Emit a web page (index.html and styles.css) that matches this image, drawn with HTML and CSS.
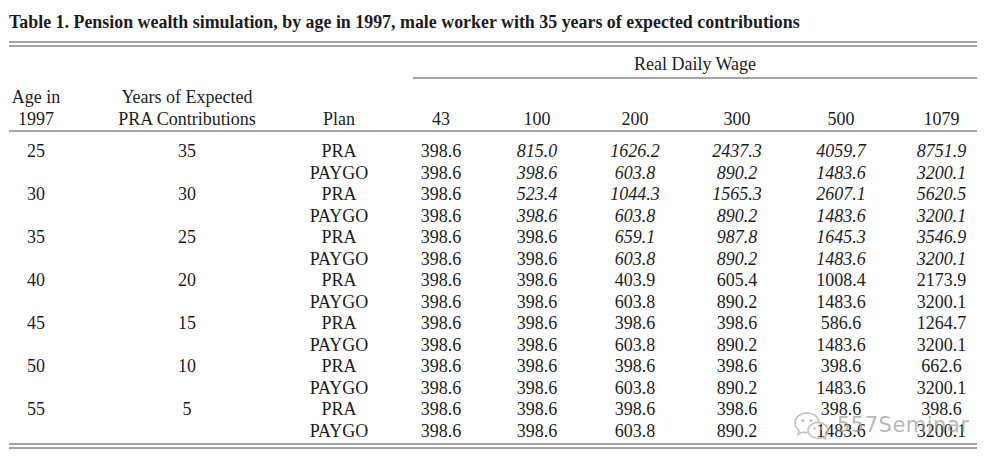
FILE: index.html
```html
<!DOCTYPE html>
<html lang="en">
<head>
<meta charset="utf-8">
<title>Table 1. Pension wealth simulation</title>
<link rel="stylesheet" href="styles.css">
</head>
<body>
<div class="page">
  <h1 class="title">Table 1. Pension wealth simulation, by age in 1997, male worker with 35 years of expected contributions</h1>
  <div class="rule-double"></div>

  <div class="wage-head">Real Daily Wage</div>

  <div class="row head">
    <div>Age in<br>1997</div>
    <div>Years of Expected<br>PRA Contributions</div>
    <div>Plan</div>
    <div>43</div>
    <div>100</div>
    <div>200</div>
    <div>300</div>
    <div>500</div>
    <div>1079</div>
  </div>

  <div class="body">
    <div class="row"><div>25</div><div>35</div><div>PRA</div><div>398.6</div><div class="i">815.0</div><div class="i">1626.2</div><div class="i">2437.3</div><div class="i">4059.7</div><div class="i">8751.9</div></div>
    <div class="row"><div></div><div></div><div>PAYGO</div><div>398.6</div><div class="i">398.6</div><div class="i">603.8</div><div class="i">890.2</div><div class="i">1483.6</div><div class="i">3200.1</div></div>
    <div class="row"><div>30</div><div>30</div><div>PRA</div><div>398.6</div><div class="i">523.4</div><div class="i">1044.3</div><div class="i">1565.3</div><div class="i">2607.1</div><div class="i">5620.5</div></div>
    <div class="row"><div></div><div></div><div>PAYGO</div><div>398.6</div><div class="i">398.6</div><div class="i">603.8</div><div class="i">890.2</div><div class="i">1483.6</div><div class="i">3200.1</div></div>
    <div class="row"><div>35</div><div>25</div><div>PRA</div><div>398.6</div><div>398.6</div><div class="i">659.1</div><div class="i">987.8</div><div class="i">1645.3</div><div class="i">3546.9</div></div>
    <div class="row"><div></div><div></div><div>PAYGO</div><div>398.6</div><div>398.6</div><div class="i">603.8</div><div class="i">890.2</div><div class="i">1483.6</div><div class="i">3200.1</div></div>
    <div class="row"><div>40</div><div>20</div><div>PRA</div><div>398.6</div><div>398.6</div><div>403.9</div><div>605.4</div><div>1008.4</div><div>2173.9</div></div>
    <div class="row"><div></div><div></div><div>PAYGO</div><div>398.6</div><div>398.6</div><div>603.8</div><div>890.2</div><div>1483.6</div><div>3200.1</div></div>
    <div class="row"><div>45</div><div>15</div><div>PRA</div><div>398.6</div><div>398.6</div><div>398.6</div><div>398.6</div><div>586.6</div><div>1264.7</div></div>
    <div class="row"><div></div><div></div><div>PAYGO</div><div>398.6</div><div>398.6</div><div>603.8</div><div>890.2</div><div>1483.6</div><div>3200.1</div></div>
    <div class="row"><div>50</div><div>10</div><div>PRA</div><div>398.6</div><div>398.6</div><div>398.6</div><div>398.6</div><div>398.6</div><div>662.6</div></div>
    <div class="row"><div></div><div></div><div>PAYGO</div><div>398.6</div><div>398.6</div><div>603.8</div><div>890.2</div><div>1483.6</div><div>3200.1</div></div>
    <div class="row"><div>55</div><div>5</div><div>PRA</div><div>398.6</div><div>398.6</div><div>398.6</div><div>398.6</div><div>398.6</div><div>398.6</div></div>
    <div class="row"><div></div><div></div><div>PAYGO</div><div>398.6</div><div>398.6</div><div>603.8</div><div>890.2</div><div>1483.6</div><div>3200.1</div></div>
  </div>

  <div class="rule-double bottom"></div>

  <div class="watermark">
    <svg class="wm-icon" width="38" height="30" viewBox="0 0 38 30" aria-hidden="true">
      <path d="M14 3 C7 3 2 7.5 2 13 C2 16 3.6 18.6 6 20.4 L5 24.5 L9.6 22 C11 22.5 12.5 22.8 14 22.8" fill="none" stroke="#b8b8b8" stroke-width="1.6" stroke-linecap="round"/>
      <path d="M14 3 C20.5 3 25.5 7 26 12" fill="none" stroke="#b8b8b8" stroke-width="1.6" stroke-linecap="round"/>
      <circle cx="10" cy="10.5" r="1.5" fill="#b8b8b8"/>
      <circle cx="18" cy="10.5" r="1.5" fill="#b8b8b8"/>
      <path d="M25 12.5 C30.5 12.5 35 16 35 20.5 C35 22.8 33.8 24.8 32 26.2 L32.8 29 L29.3 27.4 C28 27.9 26.6 28.2 25 28.2 C19.5 28.2 15 24.7 15 20.4 C15 16 19.5 12.5 25 12.5 Z" fill="none" stroke="#b8b8b8" stroke-width="1.6" stroke-linejoin="round"/>
      <circle cx="21.5" cy="18.5" r="1.2" fill="#b8b8b8"/>
      <circle cx="28.5" cy="18.5" r="1.2" fill="#b8b8b8"/>
    </svg>
    <span class="wm-text">557Seminar</span>
  </div>
</div>
</body>
</html>
```

FILE: styles.css
```css
* {
  box-sizing: border-box;
}

html, body {
  margin: 0;
  padding: 0;
  background: #ffffff;
}

body {
  font-family: "Liberation Serif", "Times New Roman", serif;
  color: #1c1c1c;
}

.page {
  position: relative;
  width: 968px;
  margin-left: 9px;
}

.title {
  margin: 0;
  padding-top: 12px;
  font-size: 17.9px;
  line-height: 20px;
  font-weight: bold;
  white-space: nowrap;
}

.rule-double {
  margin-top: 9px;
  height: 6px;
  border-top: 2px solid #a4a4a4;
  border-bottom: 2px solid #a4a4a4;
}

.rule-double.bottom {
  margin-top: 1px;
}

.wage-head {
  margin-top: 7px;
  margin-left: 404px;
  padding-bottom: 1.5px;
  border-bottom: 2px solid #a4a4a4;
  text-align: center;
  font-size: 18px;
  line-height: 21.5px;
}

.row {
  display: grid;
  grid-template-columns:
    [age] 54px 49px
    [yrs] 150px 42px
    [plan] 70px 32px
    [w1] 70px 26px
    [w2] 70px 28px
    [w3] 70px 32px
    [w4] 70px 34px
    [w5] 70px 30px
    [w6] 71px;
  font-size: 18px;
  line-height: 21.5px;
  text-align: center;
  white-space: nowrap;
}

.row > :nth-child(1) { grid-column: age; }
.row > :nth-child(2) { grid-column: yrs; }
.row > :nth-child(3) { grid-column: plan; }
.row > :nth-child(4) { grid-column: w1; }
.row > :nth-child(5) { grid-column: w2; }
.row > :nth-child(6) { grid-column: w3; }
.row > :nth-child(7) { grid-column: w4; }
.row > :nth-child(8) { grid-column: w5; }
.row > :nth-child(9) { grid-column: w6; }

.row > div {
  justify-self: center;
}

.head {
  margin-top: 8px;
  border-bottom: 2px solid #a4a4a4;
}

.head > div {
  align-self: end;
}

.body {
  padding-top: 9px;
}

.i {
  font-style: italic;
}

.watermark {
  position: absolute;
  left: 784px;
  top: 410px;
  display: flex;
  align-items: center;
  gap: 6px;
  opacity: 0.85;
}

.wm-icon {
  display: block;
}

.wm-text {
  font-family: "DejaVu Sans", sans-serif;
  font-size: 21px;
  line-height: 30px;
  color: rgba(150, 150, 150, 0.8);
  letter-spacing: 0.5px;
}
```
